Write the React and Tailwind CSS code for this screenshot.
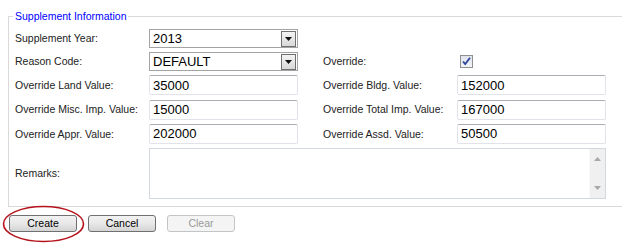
const label = "text-[10.5px] text-[#222] leading-none whitespace-nowrap";
const boxText = "text-[13px] text-black leading-none";

function Select({ value }) {
  return (
    <div className="h-[19px] w-[149px] border border-[#a3a3a3] bg-white flex items-center justify-between pl-[3px] pr-[1px]">
      <span className={boxText}>{value}</span>
      <div className="w-[15px] h-[16px] border border-[#707070] bg-gradient-to-b from-[#f4f4f4] to-[#d8d8d8] flex items-center justify-center">
        <svg width="7" height="4" viewBox="0 0 7 4">
          <path d="M0 0h7L3.5 4z" fill="#111" />
        </svg>
      </div>
    </div>
  );
}

function TextBox({ value }) {
  return (
    <div className="h-[20px] w-[149px] rounded-[2px] border border-[#e2e3ea] border-t-[#abadb3] bg-white flex items-center pl-[3px]">
      <span className={boxText}>{value}</span>
    </div>
  );
}

function Button({ children, disabled }) {
  return (
    <div
      className={`w-[68px] h-[17px] rounded-[3px] border flex items-center justify-center text-[10.5px] leading-none ${
        disabled
          ? "border-[#c2c5c8] bg-[#f4f4f4] text-[#9a9a9a]"
          : "border-[#707070] bg-gradient-to-b from-[#f2f2f2] via-[#e8e8e8] to-[#d4d4d4] text-black"
      }`}
    >
      {children}
    </div>
  );
}

export default function App() {
  return (
    <div
      className="relative w-[622px] h-[249px] overflow-hidden bg-white pl-[8px] pt-[10px]"
      style={{ fontFamily: '"Liberation Sans", Arial, sans-serif' }}
    >
      <fieldset className="w-[640px] border border-[#d9d9d9] pl-[6px] pt-[6px] pb-[7px]">
        <legend className="text-[10.5px] leading-[13px] text-[#0000ff] px-[2px] -ml-[2px]">
          Supplement Information
        </legend>
        <div className="grid grid-cols-[134px_149px_25px_134px_149px] gap-y-[4.2px] items-center">
          <span className={label}>Supplement Year:</span>
          <Select value="2013" />
          <span />
          <span />
          <span />

          <span className={label}>Reason Code:</span>
          <Select value="DEFAULT" />
          <span />
          <span className={label}>Override:</span>
          <div className="pl-[3px] flex items-center">
            <div className="w-[13px] h-[13px] border border-[#8e8f8f] bg-gradient-to-b from-[#dfe3ea] to-[#f2f4f8] flex items-center justify-center">
              <svg width="9" height="9" viewBox="0 0 9 9">
                <path d="M1 4.5l2.2 2.6L8 0.8" stroke="#31449b" strokeWidth="1.8" fill="none" />
              </svg>
            </div>
          </div>

          <span className={label}>Override Land Value:</span>
          <TextBox value="35000" />
          <span />
          <span className={label}>Override Bldg. Value:</span>
          <TextBox value="152000" />

          <span className={label}>Override Misc. Imp. Value:</span>
          <TextBox value="15000" />
          <span />
          <span className={label}>Override Total Imp. Value:</span>
          <TextBox value="167000" />

          <span className={label}>Override Appr. Value:</span>
          <TextBox value="202000" />
          <span />
          <span className={label}>Override Assd. Value:</span>
          <TextBox value="50500" />

          <span className={label}>Remarks:</span>
          <div className="col-span-4 h-[51px] border border-[#d3d8df] bg-white flex justify-end">
            <div className="w-[16px] h-full bg-[#f0f0f0] border-l border-[#fafafa] flex flex-col items-center justify-between py-[8px]">
              <svg width="7" height="4" viewBox="0 0 7 4">
                <path d="M0 4h7L3.5 0z" fill="#a8a8a8" />
              </svg>
              <svg width="7" height="4" viewBox="0 0 7 4">
                <path d="M0 0h7L3.5 4z" fill="#a8a8a8" />
              </svg>
            </div>
          </div>
        </div>
      </fieldset>

      <div className="mt-[8px] pl-[1px] flex gap-[11px]">
        <Button>Create</Button>
        <Button>Cancel</Button>
        <Button disabled>Clear</Button>
      </div>

      <svg className="absolute left-[2px] top-[205px]" width="83" height="38" viewBox="0 0 83 38">
        <ellipse cx="41.5" cy="19" rx="40" ry="17.5" fill="none" stroke="#b5121b" strokeWidth="1.6" />
      </svg>
    </div>
  );
}
